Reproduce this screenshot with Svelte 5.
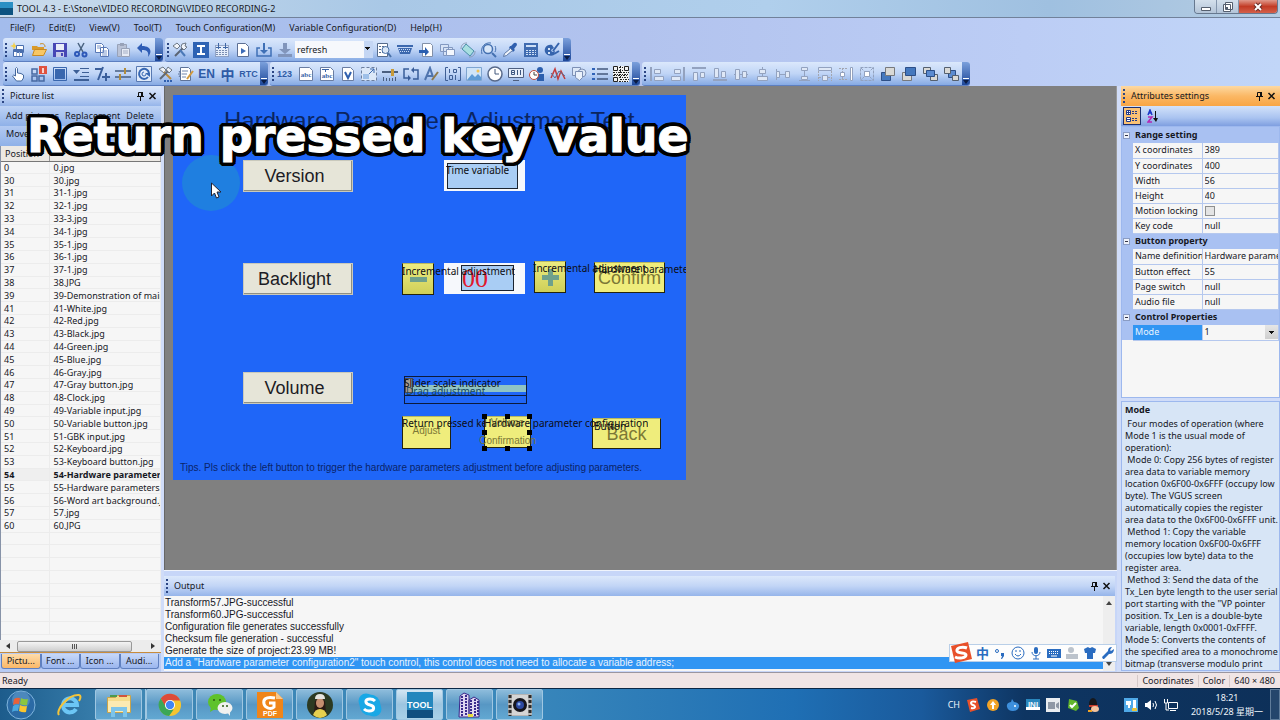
<script lang="ts">
  type Toolbar = { icons: string[]; combo?: boolean; after?: string[] };

  const menus = ['File(F)', 'Edit(E)', 'View(V)', 'Tool(T)', 'Touch Configuration(M)', 'Variable Configuration(D)', 'Help(H)'];

  // 16x16 glyphs, keyed by command name
  const icons: Record<string, string> = {
    new: '<path fill="#f4d04a" d="M4 0l1 3 3 1-3 1-1 3-1-3-3-1 3-1z"/><path fill="#fff" stroke="#4a6fae" d="M6.500 3.500h7v7h-7zM3.500 7.500h9v7h-9z"/><path fill="#4a6fae" d="M4 8h8v2H4z"/><path stroke="#9bb3d8" d="M6.500 10v4M9.500 10v4"/>',
    open: '<path fill="#d99a2b" d="M1 4h5l1 1h6v3H1z"/><path fill="#f8c765" stroke="#c98a22" d="M1.500 13.500l2-6h12l-3 6z"/><path fill="none" stroke="#c98a22" d="M9 2c3-1 5 0 5 3"/>',
    save: '<path fill="#4747b5" d="M1 1h14v14H1z"/><path fill="#e9edf8" d="M4 2h8v6H4z"/><path fill="#c7cbe8" d="M4 10h8v5H4z"/><path fill="#4747b5" d="M9 11h2v3H9z"/>',
    cut: '<path stroke="#49627f" stroke-width="1.500" d="M5 1l5 9M11 1L6 10"/><g fill="none" stroke="#2d58b8" stroke-width="2"><circle cx="4" cy="12" r="2"/><circle cx="11.500" cy="12.500" r="2"/></g>',
    copy: '<path fill="#fff" stroke="#5878b5" d="M1.500 1.500h6l2 2v7h-8zM6.500 5.500h6l2 2v7h-8z"/><path stroke="#7d98cc" d="M3 4h4M3 6h3M8 9h5M8 11h5M8 13h5"/>',
    paste: '<path fill="#b9c2d6" stroke="#98a2b8" d="M2.500 2.500h9v12h-9z"/><path fill="#98a2b8" d="M5 1h4v3H5z"/><path fill="#e6ebf5" stroke="#98a2b8" d="M6.500 6.500h8v8h-8z"/><path stroke="#a4aec4" d="M8 9h5M8 11h5"/>',
    undo: '<path fill="#2f5db5" d="M1 6l5-5v3c8 0 11 5 6 11 1-5-1-7-6-7v3z"/>',
    tools: '<path stroke="#5a6472" stroke-width="2" d="M3 14L12 5"/><path fill="#f2f5fa" stroke="#6d7886" d="M1 4l4-3 3 3-3 3zM10 2l4-1-1 3 2 1-3 3-3-3z"/><path stroke="#4b79b8" stroke-width="2" d="M8 8l5 6"/>',
    ibeam: '<path fill="#2e63b4" d="M0 0h16v16H0z"/><path stroke="#fff" stroke-width="2" d="M4 4h8M4 12h8M8 4v8"/>',
    grid: '<path fill="#e4edfa" stroke="#5a6f96" stroke-dasharray="1 1" d="M1.500 3.500h13v11h-13z"/><path stroke="#7a8eb2" stroke-dasharray="2 1" d="M2 8.500h12M2 10.500h12M2 12.500h12"/><path stroke="#3f66a5" d="M4.500 1v6M11.500 1v6M2 5.500h5M9 5.500h5"/>',
    play: '<path fill="#fff" stroke="#5c6f94" d="M2.500 1.500h8l3 3v10h-11z"/><path fill="#3c6bb7" d="M6 6l5 3-5 3z"/>',
    download: '<path fill="none" stroke="#3f70b6" stroke-width="1.500" d="M4 6H1v8h14V6h-3"/><path fill="#3f70b6" d="M7 1h2v7h3l-4 4-4-4h3z"/>',
    downoff: '<path fill="#8195bb" d="M6 1h4v6h4l-6 5-6-5h4zM1 12h14v3H1z"/>',
    preview: '<path fill="#fff" stroke="#566b8c" d="M1.500 1.500h10v13h-10z"/><path stroke="#566b8c" stroke-dasharray="2 1" d="M3 4.500h7M3 7.500h4M3 10.500h4"/><circle cx="9.500" cy="8" r="3.500" fill="#dbe8f8" stroke="#4a72a9"/><path stroke="#4a72a9" stroke-width="2" d="M12 11l3 4"/>',
    keyboard: '<path fill="#3c68ae" d="M0 3h16v2H0zM1 6h14l-2 6H3z"/><path stroke="#c6daf6" stroke-dasharray="1 1" d="M2 7.500h12M3 9.500h10"/>',
    export: '<path fill="#fff" stroke="#8290a8" d="M4.500 1.500h8l2 2v11h-10z"/><path fill="#2b5fb0" d="M1 8h6V5l4 5-4 4v-3H1z"/>',
    windows: '<path fill="#d7e3f6" stroke="#8298c0" d="M1.500 2.500h8v7h-8zM4.500 5.500h9v8h-9z"/><path fill="#f3f7fd" stroke="#8298c0" d="M7.500 7.500h8v6h-8z"/>',
    rotate: '<path fill="#a7dfe0" stroke="#4a8ea8" d="M6 2l8 7-4 5-8-7z"/><path fill="none" stroke="#8b9bb5" d="M1 7c0-4 2-6 6-6M15 9c0 4-2 6-6 6"/>',
    zoom: '<circle cx="7" cy="7" r="4.500" fill="#d8e6f8" stroke="#4470b0" stroke-width="1.500"/><path fill="none" stroke="#4470b0" d="M1 12C-1 5 4 0 10 1M14 4c1 2 1 4 0 6"/><path stroke="#4470b0" stroke-width="2" d="M11 11l4 4"/>',
    picker: '<path fill="#2f5fae" d="M9 4l3-3q3-1 3 2l-3 4 1 1-2 2-4-4 1-2z"/><path fill="#eef3fa" stroke="#5c77a4" d="M8.500 6.500l2 2-6 5-3 1 1-3z"/>',
    calc: '<path fill="#3f6bb0" d="M1 1h14v14H1z"/><path fill="#cfe0f6" d="M3 3h10v2H3z"/><path stroke="#cfe0f6" stroke-dasharray="2 1" d="M3 8.500h10M3 10.500h10M3 12.500h10"/>',
    brush: '<path fill="#3564ad" d="M8 3C2 2 0 7 1 10s6 5 9 3l1-4-3 1-1-2 3-2z"/><path stroke="#3564ad" stroke-width="2" d="M9 9l6-8M10 12l5-3"/><path fill="#d5e4f7" d="M4 6h2v2H4zM4 10h2v2H4z"/>',
    hand: '<path fill="#fff" stroke="#44689e" d="M5.500 8V2.500q1-2 2 0V7q4 0 6 2v3l-2 3h-5l-4-5q1-2 3 0z"/>',
    badge: '<g fill="none" stroke="#4769a2" stroke-width="1.500"><path d="M1 3h5v5H1zM1 10h5v5H1zM8 10h5v5H8z"/></g><path fill="#e0523f" d="M8 0h8v8H8z"/><path stroke="#fff" stroke-width="1.500" d="M12 2v5"/>',
    frame: '<path fill="none" stroke="#3a67ae" d="M1.500 1.500h13v13h-13z"/><path fill="#3a67ae" d="M3 3h10v10H3z"/>',
    droplist: '<path fill="#3d5f96" d="M0 4h7L3.500 8zM7 2h9v1H7zM9 6h7v1H9zM7 10h9v1H7zM1 13h15v2H1z"/>',
    plusminus: '<path stroke="#3b5f9b" stroke-width="2" d="M1 3h7M4 14l5-13M8 11h8M12 7v8"/>',
    sliders: '<path stroke="#475f82" stroke-width="1.500" d="M0 5h16M0 11h16"/><path fill="#b28c3c" d="M9 2h2v6H9zM4 8h2v6H4z"/>',
    refresh: '<path fill="#dfeafa" stroke="#5879b2" d="M.5.5h15v15H.5z"/><path fill="none" stroke="#3767b2" stroke-width="2" d="M12 11a5 5 0 1 1 1-4"/><path fill="none" stroke="#3767b2" d="M10 8a2 2 0 1 1-2-2"/><path fill="#3767b2" d="M9 7h5v4z"/>',
    hammer: '<path fill="#eef1f6" stroke="#6c7785" d="M2 3l4-2 3 3-2 3zM11 1l4 3-3 3-3-3z"/><path stroke="#b98b3f" stroke-width="2" d="M7 6l7 7"/><path stroke="#5e6875" stroke-width="2" d="M11 5l-8 8"/><path stroke="#3060b0" stroke-width="2" stroke-dasharray="2 1" d="M7 15h9"/>',
    edit: '<path fill="#fff" stroke="#5e7399" d="M2.500 1.500h8l2 2v11h-10z"/><path stroke="#7087ae" d="M4 5h6M4 8h5M4 11h4"/><path stroke="#d39a3c" stroke-width="2" d="M15 5l-6 8"/><path stroke="#5e7399" d="M0 8h3M1 5l2 3-2 3"/>',
    abc: '<path fill="#fff" stroke="#6a7da2" d="M1.500 1.500h10l3 3v10h-13z"/><text x="8" y="11" text-anchor="middle" font-size="7" font-family="Liberation Serif" font-weight="bold" fill="#3b65a8">abc</text>',
    abct: '<path fill="#fff" stroke="#6a7da2" d="M1.500 1.500h10l3 3v10h-13z"/><path stroke="#3b65a8" d="M3 3.500h7M6.500 3v3"/><text x="8" y="12" text-anchor="middle" font-size="7" font-family="Liberation Serif" font-weight="bold" fill="#3b65a8">abc</text>',
    v: '<path fill="#fff" stroke="#6a7da2" d="M2.500 1.500h8l3 3v10h-11z"/><path fill="none" stroke="#2f5fae" stroke-width="2" d="M5 6l3 6 3-6"/>',
    region: '<path fill="#dce8f8" stroke="#6d7f9e" stroke-dasharray="3 2" d="M.5 1.500h15v13H.5z"/><path fill="#9fc0e8" d="M2 8h6v5H2z"/><path fill="none" stroke="#3d6ab0" d="M8 8l5-5M9 3h4v4"/>',
    slider: '<path stroke="#4b5f80" stroke-width="2" d="M0 6h16"/><path fill="#c89b3a" d="M9 3h3v7H9z"/><path stroke="#4b5f80" d="M1.500 11v4M4.500 12v3M7.500 12v3M10.500 12v3M13.500 11v4"/>',
    cycle: '<path fill="none" stroke="#395d99" stroke-width="1.500" d="M6 3H1v9h4M10 13h5V4h-4"/><path fill="#395d99" d="M5 9l3 3-3 3zM11 1v6L8 4z"/>',
    font: '<path fill="none" stroke="#4f74ae" stroke-width="2" d="M1 14L6 2l3 9M3 10h6"/><path stroke="#8e7a4e" stroke-width="2" d="M14 6l-6 8"/>',
    bits: '<path fill="none" stroke="#3f5f95" d="M3 1.500H.5v13H3M13 1.500h2.500v13H13"/><path fill="none" stroke="#3f5f95" d="M4.500 3v4M8.500 3.500h3v3h-3zM4.500 9.500h3v4h-3zM10.500 9v5"/>',
    image: '<path fill="#cfe4f8" stroke="#7fa5d0" d="M.5 1.500h15v13H.5z"/><path fill="#5e9bd6" d="M1 14l5-6 3 3 3-3 3 3v3z"/><circle cx="12" cy="5" r="1.500" fill="#f0c052"/>',
    clock: '<circle cx="8" cy="8" r="7" fill="#fff" stroke="#58698a" stroke-width="1.500"/><path fill="none" stroke="#43587c" d="M8 3v5h4"/>',
    board: '<path fill="#e6eefa" stroke="#4e5f80" d="M.5 2.500h15v9H.5zM5 14.500h6"/><path fill="none" stroke="#3c5680" d="M3.500 4.500h3v2h-3zM3.500 6.500h3v2h-3zM9.500 4v5M12.500 4v5"/>',
    user: '<circle cx="11" cy="4" r="3" fill="#2c5fae"/><path fill="#2c5fae" d="M8 8h7v7H8z"/><circle cx="5" cy="9" r="4.500" fill="#fff" stroke="#c04a3c"/><path fill="none" stroke="#444" d="M5 6v3h3"/>',
    chart: '<path fill="none" stroke="#c23c3c" stroke-width="1.500" d="M1 12l4-9 3 10 3-8 4 8"/><path fill="none" stroke="#5a6f96" d="M1 7l4 5 4-7 6 5"/>',
    shapes: '<path fill="#dce7f7" stroke="#7d90b5" d="M1.500 1.500h8v8h-8z"/><circle cx="11" cy="7" r="4" fill="#dce7f7" stroke="#7d90b5"/><path fill="#eaf1fb" stroke="#7d90b5" d="M4.500 5.500h7v6l-3 3-4-3z"/>',
    list: '<path stroke="#44587c" stroke-width="1.500" d="M5 3h11M5 8h11M5 13h11"/><path fill="#2f62b8" d="M0 2h3v2H0zM0 7h3v2H0zM0 12h3v2H0z"/>',
    qr: '<path fill="#f2f2f2" d="M0 0h16v16H0z"/><path fill="none" stroke="#222" d="M.5.500h4v4h-4zM11.500.5h4v4h-4zM.5 11.500h4v4h-4z"/><path stroke="#222" stroke-dasharray="2 1 1 1" d="M6 1.500h5M6 4.500h5M0 6.500h16M1 8.500h15M0 9.500h14M6 11.500h10M7 13.500h9M6 15.500h9M7.500 0v16"/>',
    alLeft: '<path stroke="#93a2bf" stroke-width="2" d="M2 1v14"/><path fill="#dfe8f6" stroke="#93a2bf" d="M5.500 3.500h6v4h-6zM5.500 10.500h9v4h-9z"/>',
    alRight: '<path stroke="#93a2bf" stroke-width="2" d="M14 1v14"/><path fill="#dfe8f6" stroke="#93a2bf" d="M4.500 3.500h6v4h-6zM1.500 10.500h9v4h-9z"/>',
    alTop: '<path stroke="#93a2bf" stroke-width="2" d="M1 2h14"/><path fill="#dfe8f6" stroke="#93a2bf" d="M2.500 6.500h4v8h-4zM9.500 6.500h4v5h-4z"/>',
    alBottom: '<path stroke="#93a2bf" stroke-width="2" d="M1 14h14"/><path fill="#dfe8f6" stroke="#93a2bf" d="M2.500 2.500h4v9h-4zM9.500 5.500h4v6h-4z"/>',
    alMid: '<path stroke="#93a2bf" d="M1 8.500h14"/><path fill="#dfe8f6" stroke="#93a2bf" d="M2.500 3.500h4v10h-4zM9.500 5.500h4v6h-4z"/>',
    alCenter: '<path stroke="#93a2bf" d="M8.500 1v14"/><path fill="#dfe8f6" stroke="#93a2bf" d="M5.500 3.500h6v4h-6zM3.500 10.500h10v4h-10z"/>',
    spaceH: '<path stroke="#93a2bf" d="M1.500 3v11M5 8.500h5"/><path fill="#dfe8f6" stroke="#93a2bf" d="M1.500 5.500h3v6h-3zM10.500 5.500h4v6h-4z"/>',
    spaceV: '<path stroke="#93a2bf" d="M3 14.500h11M8.500 5v6"/><path fill="#dfe8f6" stroke="#93a2bf" d="M5.500 1.500h6v3h-6zM5.500 10.500h6v3h-6z"/>',
    sameW: '<path stroke="#a3a6b0" stroke-dasharray="2 1" d="M1.500 5v10M14.500 5v10M2 11.500h12"/><path fill="#dfe8f6" stroke="#93a2bf" d="M1.500 1.500h13v3h-13zM5.500 9.500h5v5h-5z"/>',
    sameH: '<path stroke="#a3a6b0" stroke-dasharray="2 1" d="M1 2.500h8M1 13.500h8M4.500 2v12"/><path fill="#fff" stroke="#93a2bf" d="M12.500 1.500h2v13h-2zM2.500 6.500h4v4h-4z"/>',
    sameWH: '<path fill="none" stroke="#93a2bf" stroke-dasharray="3 1" d="M1.500 1.500h13v13h-13zM2 2l12 12M14 2L2 14"/><path fill="#fff" stroke="#93a2bf" d="M5.500 5.500h5v5h-5z"/>',
    front: '<path fill="#4478be" stroke="#2d4f87" d="M1.500 6.500h9v8h-9z"/><path fill="#d9d9d6" stroke="#77797c" d="M5.500 1.500h9v8h-9z"/>',
    back: '<path fill="#d9d9d6" stroke="#77797c" d="M1.500 6.500h9v8h-9z"/><path fill="#4478be" stroke="#2d4f87" d="M4.500 1.500h10v8h-10z"/>',
    forward: '<path fill="#d9d9d6" stroke="#55606e" d="M1.500 1.500h7v6h-7zM8.500 8.500h7v6h-7z"/><path fill="#5b8bd0" stroke="#2d4f87" d="M4.500 4.500h8v6h-8z"/>',
    backward: '<path fill="#5b8bd0" stroke="#2d4f87" d="M5.500 4.500h7v7h-7z"/><path fill="#d9d9d6" stroke="#55606e" d="M1.500 1.500h6v6h-6zM9.500 9.500h6v5h-6z"/>',
  };

  // glyphs that are lettering rather than drawings
  const words: Record<string, string> = { en: 'EN', zhong: '中', rtc: 'RTC', num: '123' };

  const mainBars: Toolbar[] = [
    { icons: ['new', 'open', 'save', 'cut', 'copy', 'paste', 'undo'] },
    {
      icons: ['tools', 'ibeam', 'grid', 'play', 'download', 'downoff'],
      combo: true,
      after: ['preview', 'keyboard', 'export', 'windows', 'rotate', 'zoom', 'picker', 'calc', 'brush'],
    },
  ];

  const controlBars: Toolbar[] = [
    { icons: ['hand', 'badge', 'frame', 'droplist', 'plusminus', 'sliders', 'refresh', 'hammer', 'edit', 'en', 'zhong', 'rtc'] },
    { icons: ['num', 'abc', 'abct', 'v', 'region', 'slider', 'cycle', 'font', 'bits', 'image', 'clock', 'board', 'user', 'chart', 'shapes', 'list', 'qr'] },
    { icons: ['alLeft', 'alRight', 'alTop', 'alBottom', 'alMid', 'alCenter', 'spaceH', 'spaceV', 'sameW', 'sameH', 'sameWH', 'front', 'back', 'forward', 'backward'] },
  ];

  const pictures: [string, string][] = [
    ['0', '0.jpg'], ['30', '30.jpg'], ['31', '31-1.jpg'], ['32', '32-1.jpg'], ['33', '33-3.jpg'],
    ['34', '34-1.jpg'], ['35', '35-1.jpg'], ['36', '36-1.jpg'], ['37', '37-1.jpg'], ['38', '38.JPG'],
    ['39', '39-Demonstration of main.jpg'], ['41', '41-White.jpg'], ['42', '42-Red.jpg'], ['43', '43-Black.jpg'],
    ['44', '44-Green.jpg'], ['45', '45-Blue.jpg'], ['46', '46-Gray.jpg'], ['47', '47-Gray button.jpg'],
    ['48', '48-Clock.jpg'], ['49', '49-Variable input.jpg'], ['50', '50-Variable button.jpg'], ['51', '51-GBK input.jpg'],
    ['52', '52-Keyboard.jpg'], ['53', '53-Keyboard button.jpg'], ['54', '54-Hardware parameters.jpg'],
    ['55', '55-Hardware parameters.jpg'], ['56', '56-Word art background.jpg'], ['57', '57.jpg'], ['60', '60.JPG'],
  ];
  const blankRows = 8;
  let selected = $state('54');

  const tabs = ['Pictu...', 'Font ...', 'Icon ...', 'Audi...'];

  const groups = [
    {
      name: 'Range setting',
      rows: [['X coordinates', '389'], ['Y coordinates', '400'], ['Width', '56'], ['Height', '40'], ['Motion locking', 'check'], ['Key code', 'null']],
    },
    {
      name: 'Button property',
      rows: [['Name definition', 'Hardware parameter configuration2'], ['Button effect', '55'], ['Page switch', 'null'], ['Audio file', 'null']],
    },
    { name: 'Control Properties', rows: [['Mode', 'select']] },
  ];

  const help = [
    ' Four modes of operation (where', 'Mode 1 is the usual mode of', 'operation):',
    ' Mode 0: Copy 256 bytes of register', 'area data to variable memory', 'location 0x6F00-0x6FFF (occupy low',
    'byte). The VGUS screen', 'automatically copies the register', 'area data to the 0x6F00-0x6FFF unit.',
    ' Method 1: Copy the variable', 'memory location 0x6F00-0x6FFF', '(occupies low byte) data to the', 'register area.',
    ' Method 3: Send the data of the', 'Tx_Len byte length to the user serial', 'port starting with the "VP pointer',
    'position. Tx_Len is a double-byte', 'variable, length 0x0001-0xFFFF.', 'Mode 5: Converts the contents of',
    'the specified area to a monochrome', 'bitmap (transverse modulo print',
  ].join('\n');

  const output = [
    'Transform57.JPG-successful',
    'Transform60.JPG-successful',
    'Configuration file generates successfully',
    'Checksum file generation - successful',
    'Generate the size of project:23.99 MB!',
    'Add a "Hardware parameter configuration2" touch control, this control does not need to allocate a variable address;',
  ];
</script>

{#snippet tool(name: string)}
  <button class="tool" title={name}>
    {#if words[name]}
      <b class="word {name}">{words[name]}</b>
    {:else}
      <svg viewBox="0 0 16 16" width="16" height="16" fill="none">{@html icons[name]}</svg>
    {/if}
  </button>
{/snippet}

{#snippet toolbar(bar: Toolbar)}
  <div class="toolbar" role="toolbar">
    <i class="grip"></i>
    {#each bar.icons as name}{@render tool(name)}{/each}
    {#if bar.combo}
      <select class="combo" aria-label="Command"><option>refresh</option></select>
    {/if}
    {#each bar.after ?? [] as name}{@render tool(name)}{/each}
    <button class="more" aria-label="More buttons">
      <svg viewBox="0 0 8 8" width="8" height="8"><path fill="#fff" d="M1 1h6v1H1z" /><path fill="#0a1c44" d="M1 3h6L4 7z" /></svg>
    </button>
  </div>
{/snippet}

{#snippet panelButtons()}
  <button class="mini" aria-label="Pin">
    <svg viewBox="0 0 9 10" width="9" height="10"><path fill="none" stroke="#111" d="M2.500 1.500h4v4h-4zM1 5.500h7M4.500 6v4" /><path fill="#111" d="M5 1h2v5H5z" /></svg>
  </button>
  <button class="mini" aria-label="Close">
    <svg viewBox="0 0 9 10" width="9" height="10"><path fill="none" stroke="#111" stroke-width="1.500" d="M1.500 2l6 6M7.500 2l-6 6" /></svg>
  </button>
{/snippet}

<div class="window">
  <header class="titlebar">
    <span class="logo"></span>
    <h1>TOOL 4.3 - E:\Stone\VIDEO RECORDING\VIDEO RECORDING-2</h1>
    <div class="controls">
      <button aria-label="Minimize"><svg viewBox="0 0 12 10" width="12" height="10"><path fill="#fff" stroke="#555f6e" d="M1.500 5.500h9v3h-9z" /></svg></button>
      <button aria-label="Restore"><svg viewBox="0 0 12 10" width="12" height="10"><path fill="#fff" stroke="#555f6e" d="M3.500.5h7v7h-7zM1.500 2.500h7v7h-7z" /><path fill="#555f6e" d="M4 5h2v2H4z" /></svg></button>
      <button class="close" aria-label="Close window"><svg viewBox="0 0 12 10" width="12" height="10"><path stroke="#6b2b26" stroke-width="4" d="M3 2l6 6M9 2L3 8" /><path stroke="#fff" stroke-width="2" d="M3 2l6 6M9 2L3 8" /></svg></button>
    </div>
  </header>

  <nav class="menubar">
    {#each menus as menu}<button>{menu}</button>{/each}
  </nav>

  <div class="bars">
    <div class="barrow">{#each mainBars as bar}{@render toolbar(bar)}{/each}</div>
    <div class="barrow">{#each controlBars as bar}{@render toolbar(bar)}{/each}</div>
  </div>

  <main class="work">
    <aside class="left">
      <div class="panelhead"><i class="grip"></i><h2>Picture list</h2>{@render panelButtons()}</div>
      <div class="actions">
        <button>Add pictures</button><button>Replacement</button><button>Delete</button>
        <button>Move up</button>
      </div>
      <div class="listbox">
        <table class="pictures">
          <thead><tr><th>Position</th><th aria-label="Picture"></th></tr></thead>
          <tbody>
            {#each pictures as [position, name]}
              <tr class:selected={selected === position} onclick={() => (selected = position)}>
                <td>{position}</td><td>{name}</td>
              </tr>
            {/each}
            {#each Array(blankRows) as _}
              <tr><td>&nbsp;</td><td>&nbsp;</td></tr>
            {/each}
          </tbody>
        </table>
      </div>
      <div class="hscroll">
        <svg viewBox="0 0 6 8" width="6" height="8"><path fill="#333" d="M5 1v6L1 4z" /></svg>
        <div class="hthumb"><i></i><i></i><i></i></div>
        <svg viewBox="0 0 6 8" width="6" height="8"><path fill="#333" d="M1 1v6l4-3z" /></svg>
      </div>
      <div class="tabs">
        {#each tabs as tab, i}<button class:active={i === 0}>{tab}</button>{/each}
      </div>
    </aside>

    <section class="center">
      <div class="canvas">
        <div class="stage">
          <p class="heading">Hardware Parameters Adjustment Test</p>
          <div class="plate version">Version</div>
          <div class="plate backlight">Backlight</div>
          <div class="plate volume">Volume</div>

          <div class="field time"><span></span></div>
          <div class="field level"><span>00</span></div>

          <button class="key minus" aria-label="Decrease"></button>
          <button class="key plus" aria-label="Increase"></button>
          <button class="key confirm">Confirm</button>
          <button class="key adjust">Adjust</button>
          <button class="key apply"><span>Volume</span><span>Confirmation</span></button>
          <button class="key goback">Back</button>

          <div class="track"><input type="range" min="0" max="100" value="0" aria-label="Volume level" /></div>

          <span class="tag t-time">Time variable</span>
          <span class="tag t-dec">Incremental adjustment</span>
          <span class="tag t-inc">Incremental adjustment</span>
          <span class="tag t-conf">Hardware parameter configuration</span>
          <span class="tag t-slide">Slider scale indicator</span>
          <span class="tag t-drag">Drag adjustment</span>
          <span class="tag t-ret">Return pressed key value</span>
          <span class="tag t-hard">Hardware parameter configuration</span>
          <span class="tag t-btn">Button</span>

          <div class="handles">
            {#each Array(9) as _, i}<i class:blank={i === 4}></i>{/each}
          </div>

          <p class="tips">Tips. Pls click the left button to trigger the hardware parameters adjustment before adjusting parameters.</p>

          <div class="pointer">
            <svg viewBox="0 0 12 18" width="12" height="18"><path fill="#fff" stroke="#223" d="M.5 1v13l3-3 2 5 2.500-1-2-5h4z" /></svg>
          </div>
        </div>
      </div>

      <div class="output">
        <div class="panelhead"><i class="grip"></i><h2>Output</h2>{@render panelButtons()}</div>
        <div class="log">
          <ol>
            {#each output as line, i}<li class:current={i === output.length - 1}>{line}</li>{/each}
          </ol>
          <div class="vscroll">
            <svg viewBox="0 0 8 6" width="8" height="6"><path fill="#444" d="M1 5h6L4 1z" /></svg>
            <svg viewBox="0 0 8 6" width="8" height="6"><path fill="#444" d="M1 1h6L4 5z" /></svg>
          </div>
        </div>
        <div class="ime">
          <svg class="sogou" viewBox="0 0 22 22" width="22" height="22"><path fill="#e8502a" d="M1 4l17-4 4 17-17 4z" /><path fill="none" stroke="#fff" stroke-width="3" d="M17 6C12 4 6 6 7 9s9 1 9 4-7 4-11 2" /></svg>
          <b>中</b>
          <svg viewBox="0 0 14 14" width="14" height="14"><circle cx="4" cy="5" r="1.500" fill="none" stroke="#2a6cc0" /><path fill="#2a6cc0" d="M8 7h3v3l-2 3H8l1-3H8z" /></svg>
          <svg viewBox="0 0 14 14" width="14" height="14"><circle cx="7" cy="7" r="6" fill="none" stroke="#2a6cc0" /><path fill="none" stroke="#2a6cc0" d="M5 4v2M9 4v2M4 8q3 4 6 0" /></svg>
          <svg viewBox="0 0 14 14" width="14" height="14"><rect x="5" y="1" width="4" height="7" rx="2" fill="#2a6cc0" /><path fill="none" stroke="#2a6cc0" d="M3 6c0 5 8 5 8 0M7 10v3M4 13h6" /></svg>
          <svg viewBox="0 0 14 14" width="14" height="14"><rect x="0" y="3" width="14" height="9" fill="#2a6cc0" /><path stroke="#fff" stroke-dasharray="1 1" d="M2 5.500h10M2 7.500h10" /><path stroke="#fff" d="M4 10h6" /></svg>
          <svg viewBox="0 0 14 14" width="14" height="14"><circle cx="6" cy="4" r="3" fill="#bcc3cc" /><path fill="#bcc3cc" d="M1 8h12v5H1z" /></svg>
          <svg viewBox="0 0 14 14" width="14" height="14"><path fill="#2a6cc0" d="M1 3l4-2q2 2 4 0l4 2-1 4h-2v6H4V7H2z" /></svg>
          <svg viewBox="0 0 14 14" width="14" height="14"><path fill="#2a6cc0" d="M2 13l-1-2 6-6q0-4 4-4L9 4l1 1 3-2q0 5-5 5l-5 5z" /></svg>
        </div>
      </div>
    </section>

    <aside class="right">
      <div class="panelhead orange"><i class="grip"></i><h2>Attributes settings</h2>{@render panelButtons()}</div>
      <div class="sorters">
        <button class="on" aria-label="Categorized"><svg viewBox="0 0 14 14" width="14" height="14"><path fill="#fff" stroke="#223a8a" d="M1.500 1.500h4v4h-4zM1.500 8.500h4v4h-4z" /><path stroke="#223a8a" d="M3.500 2v3M2 3.500h3M2 10.500h3" /><path stroke="#223a8a" stroke-dasharray="2 1" d="M7 2.500h5M7 4.500h5M7 9.500h5M7 11.500h5" /></svg></button>
        <button aria-label="Alphabetical"><svg viewBox="0 0 12 14" width="12" height="14"><path fill="none" stroke="#1b38c8" stroke-width="1.500" d="M1 6l2-5 2 5M2 4h3" /><path fill="none" stroke="#b426b4" stroke-width="1.500" d="M1 8h4l-4 5h4" /><path fill="#111" d="M8 2h1v7h2l-2 4-3-4h2z" /></svg></button>
      </div>
      <div class="props">
        <table>
          <colgroup><col class="c-fold" /><col class="c-key" /><col /></colgroup>
          {#each groups as group}
            <tbody>
              <tr class="group"><td><i class="fold"></i></td><th colspan="2">{group.name}</th></tr>
              {#each group.rows as [key, value]}
                <tr class:current={key === 'Mode'}>
                  <td></td>
                  <th scope="row"><label for="p-{key}">{key}</label></th>
                  <td class="value">
                    {#if value === 'check'}
                      <input id="p-{key}" type="checkbox" />
                    {:else if value === 'select'}
                      <select id="p-{key}"><option>1</option></select>
                    {:else}
                      <input id="p-{key}" type="text" {value} />
                    {/if}
                  </td>
                </tr>
              {/each}
            </tbody>
          {/each}
        </table>
      </div>
      <div class="help">
        <h3>Mode</h3>
        <p>{help}</p>
      </div>
    </aside>
  </main>

  <div class="status"><span class="ready">Ready</span><span>Coordinates</span><span>Color</span><span>640 × 480</span></div>

  <footer class="taskbar">
    <button class="orb" aria-label="Start">
      <svg viewBox="0 0 30 30" width="30" height="30"><circle cx="15" cy="15" r="14" fill="#2b6aa5" stroke="#7fb4dc" /><circle cx="15" cy="10" r="9" fill="#6da6d3" opacity=".5" /><path fill="#e8623a" d="M8 9q3-2 6-1l-1 6q-3-1-6 1z" /><path fill="#8cc63f" d="M15 8q3 2 7 1l-1 6q-3 1-7-1z" /><path fill="#4aa8e0" d="M7 16q3-2 6-1l-1 6q-3-1-6 1z" /><path fill="#fbc52d" d="M14 15q3 2 7 1l-1 6q-3 1-7-1z" /></svg>
    </button>
    <button class="task flat" aria-label="Internet Explorer">
      <svg viewBox="0 0 26 26" width="26" height="26"><path fill="none" stroke="#6cc6f5" stroke-width="4" d="M20 17a7 7 0 1 1 1-4H8" /><path fill="none" stroke="#f3c43a" stroke-width="2" d="M3 23C-1 18 13 2 23 3q3 1 0 6" /></svg>
    </button>
    <button class="task" aria-label="Explorer">
      <svg viewBox="0 0 26 26" width="26" height="26"><path fill="#f5dc8c" stroke="#c9a44b" d="M1.500 5.500h8l2-2h13v17h-23z" /><path stroke="#4c9a4c" stroke-width="2" d="M4 4h7" /><path stroke="#d2543c" stroke-width="2" d="M13 4h8" /><path fill="#fbeab2" d="M2 9h22v11H2z" /><path fill="none" stroke="#7cc4ea" stroke-width="4" d="M7 25v-8h12v8" /></svg>
    </button>
    <i class="stack"></i>
    <button class="task" aria-label="Chrome">
      <svg viewBox="0 0 26 26" width="24" height="24"><circle cx="13" cy="13" r="12" fill="#f4c430" /><path fill="#dd4b39" d="M3 6a12 12 0 0 1 21 2H13a6 6 0 0 0-5 8z" /><path fill="#3aa757" d="M3 6l6 10q3 3 8 2l-5 7A12 12 0 0 1 3 6z" /><circle cx="13" cy="13" r="5.500" fill="#fff" /><circle cx="13" cy="13" r="4.500" fill="#4285f4" /></svg>
    </button>
    <button class="task" aria-label="WeChat">
      <svg viewBox="0 0 26 26" width="26" height="26"><ellipse cx="10" cy="10" rx="9" ry="8" fill="#5fc22b" /><path fill="#5fc22b" d="M4 15l-1 5 5-3z" /><ellipse cx="18" cy="16" rx="7.500" ry="6" fill="#f1f1ef" /><path fill="#f1f1ef" d="M20 20l3 4v-5z" /><g fill="#2c5a12"><circle cx="7" cy="8" r="1" /><circle cx="13" cy="8" r="1" /><circle cx="16" cy="14" r="1" /><circle cx="20" cy="14" r="1" /></g></svg>
    </button>
    <button class="task" aria-label="PDF reader">
      <svg viewBox="0 0 26 26" width="26" height="26"><path fill="#f08519" d="M0 0h19l7 7v19H0z" /><path fill="#fbc88a" d="M19 0l7 7h-7z" /><path fill="none" stroke="#fff" stroke-width="3" d="M18 6C8 4 6 8 7 12s7 6 10 3v-4h-5" /><text x="13" y="24" text-anchor="middle" font-size="7" font-family="Liberation Sans" font-weight="bold" fill="#fff">PDF</text></svg>
    </button>
    <button class="task" aria-label="Profile">
      <svg viewBox="0 0 26 26" width="26" height="26"><circle cx="13" cy="13" r="13" fill="#2c3a22" /><path fill="#2a1a14" d="M8 9q5-5 10 0l1 12H7z" /><ellipse cx="13" cy="11" rx="4" ry="5" fill="#c58f70" /><path fill="#e6e4de" d="M8 7q0-5 5-5t5 5z" /><path fill="#e6d04e" d="M6 23q2-6 7-6t7 6q-7 6-14 0z" /></svg>
    </button>
    <button class="task" aria-label="Skype">
      <svg viewBox="0 0 26 26" width="26" height="26"><circle cx="9" cy="9" r="7.500" fill="#19a8e6" /><circle cx="17" cy="17" r="7.500" fill="#19a8e6" /><circle cx="13" cy="13" r="10.500" fill="#19a8e6" /><path fill="none" stroke="#fff" stroke-width="3" d="M18 9q-2-2-5-2c-6 0-5 5 0 6s5 6-1 6q-3 0-5-2" /></svg>
    </button>
    <button class="task active" aria-label="Tool"><b class="toolicon">TOOL</b></button>
    <button class="task" aria-label="Builder">
      <svg viewBox="0 0 26 26" width="26" height="26"><path fill="#ded6f0" stroke="#3a2a8c" d="M3 4l4-3 5 2v22H2zM12 8l5-3 5 3v17H12z" /><path stroke="#3a2a8c" stroke-width="2" stroke-dasharray="2 1" d="M5 4v20M9 3v21M14 8v16M18 7v17M21 9v15" /><path fill="#e8dc3c" d="M11 22h5v3h-5z" /></svg>
    </button>
    <button class="task" aria-label="Recorder">
      <svg viewBox="0 0 26 26" width="26" height="26"><rect x="1" y="2" width="24" height="22" rx="2" fill="#b5b5b5" /><path stroke="#2a2a2a" stroke-width="3" stroke-dasharray="3 2" d="M3 3v21M23 3v21" /><rect x="5" y="3" width="16" height="20" fill="#d5d5d5" /><circle cx="13" cy="13" r="7" fill="#15151c" /><circle cx="13" cy="13" r="4" fill="#2c49a0" /><circle cx="12" cy="12" r="1.500" fill="#8fb4f0" /></svg>
    </button>

    <div class="tray">
      <span class="lang">CH</span>
      <svg viewBox="0 0 14 14" width="14" height="14"><path fill="#e8502a" d="M1 2l10-2 3 11-10 3z" /><path fill="none" stroke="#fff" stroke-width="2" d="M10 4C4 2 4 6 7 7s3 4-2 3" /></svg>
      <svg viewBox="0 0 14 14" width="14" height="14"><circle cx="7" cy="7" r="6" fill="#f2a325" /><path fill="#fff" d="M7 3l3 4H8v4H6V7H4z" /></svg>
      <svg viewBox="0 0 14 14" width="14" height="14"><path fill="#3d8fdc" d="M6 1l2 3q6 1 5 5t-6 4-6-4 4-5z" /><circle cx="9" cy="8" r="1" fill="#fff" /></svg>
      <span class="traytool">INI</span>
      <svg viewBox="0 0 14 14" width="14" height="14"><rect width="14" height="14" fill="#e9ecf0" /><path fill="#8f98a6" d="M2 4h7v7H2zM10 6l3-2v7l-3-2z" /></svg>
      <svg viewBox="0 0 14 14" width="14" height="14"><path fill="#62b52c" d="M3 1l8 2 2 7-3 3-8-3z" /><path fill="none" stroke="#fff" stroke-width="2" d="M4 7l2 2 4-4" /></svg>
      <svg viewBox="0 0 14 14" width="14" height="14"><ellipse cx="7" cy="6" rx="4" ry="6" fill="#16181c" /><path fill="#c83c2c" d="M3 7h9v2H3z" /><ellipse cx="9" cy="11" rx="4" ry="3" fill="#f3c3a0" /><path fill="#f2a325" d="M2 12h4v2H2z" /></svg>
      <svg class="apart" viewBox="0 0 14 14" width="14" height="14"><path fill="#4fa9e8" d="M0 0h14v14H0z" /><path fill="#fff" d="M2 3h5v4H2zM4 7h2v3H4zM9 2h3v8H9z" /><path fill="#e8c23c" d="M8 10h5v3H8z" /></svg>
      <svg viewBox="0 0 14 14" width="14" height="14"><path fill="#fff" d="M1 5h2l4-3v10L3 9H1z" /><path fill="none" stroke="#fff" d="M9 5q1 2 0 4M11 3q3 4 0 8" /></svg>
      <svg viewBox="0 0 14 14" width="14" height="14"><path fill="none" stroke="#fff" d="M4.500 4.500h9v6h-9zM6 12.500h6M.5 1v4h3v-4M2 5v7h3" /></svg>
      <time><span>18:21</span><span>2018/5/28 星期一</span></time>
    </div>
    <button class="desktop" aria-label="Show desktop"></button>
  </footer>

  <p class="caption">Return pressed key value</p>
</div>

<style>
  :global(body) {
    margin: 0;
  }

  .window {
    position: relative;
    display: flex;
    flex-direction: column;
    height: 100vh;
    overflow: hidden;
    background: #bccff5;
    color: #16181f;
    font: 9px/12px "Noto Sans", "Noto Sans CJK SC", sans-serif;
  }

  .window * {
    box-sizing: border-box;
  }

  button,
  input,
  select {
    margin: 0;
    padding: 0;
    border: 0;
    background: none;
    color: inherit;
    font: inherit;
  }

  svg {
    display: block;
    flex: none;
  }

  h1,
  h2,
  h3,
  p,
  ol {
    margin: 0;
    padding: 0;
    font-size: inherit;
    font-weight: normal;
  }

  /* title bar and menu */
  .titlebar {
    display: flex;
    align-items: center;
    flex: none;
    height: 18px;
    padding-right: 2px;
    border-bottom: 1px solid #71819a;
    background: linear-gradient(90deg, #cbdcec, #a9c8e6 30%, #b0cfec 60%, #9fc0e0 82%, #b5cce2);
  }

  .titlebar h1 {
    flex: 1;
    margin-left: 4px;
    white-space: nowrap;
  }

  .logo {
    width: 13px;
    height: 13px;
    background: linear-gradient(#2a8fc4 50%, #0d5380 50%);
  }

  .controls {
    display: flex;
    align-self: flex-start;
    border: 1px solid #66788f;
    border-top: 0;
    border-radius: 0 0 4px 4px;
    overflow: hidden;
  }

  .controls button {
    display: flex;
    justify-content: center;
    align-items: center;
    width: 22px;
    height: 13px;
    border-right: 1px solid #8496ad;
    background: linear-gradient(#d4e0ec, #b3c4d8);
  }

  .controls .close {
    width: 38px;
    border: 0;
    background: linear-gradient(#e09a8c, #c23b25 50%, #d4604a);
  }

  .menubar {
    display: flex;
    align-items: center;
    flex: none;
    height: 20px;
    padding-left: 3px;
    background: linear-gradient(90deg, #a3bcec, #b2c3ee 50%, #bccdf5 80%, #c1d6f8);
  }

  .menubar button {
    padding: 0 7px;
  }

  /* toolbars */
  .bars {
    flex: none;
    background: linear-gradient(90deg, #a3bcec, #b2c3ee 50%, #bccdf5 80%, #c1d6f8);
  }

  .barrow {
    display: flex;
    gap: 2px;
    height: 24px;
    padding-left: 3px;
  }

  .toolbar {
    display: flex;
    align-items: center;
    height: 24px;
    border-radius: 3px;
    background: linear-gradient(#dbe8fc, #c0d5f6 50%, #86aae4);
    border-bottom: 1px solid #5d7fc0;
  }

  .grip {
    flex: none;
    width: 2px;
    height: 14px;
    margin: 0 0 0 2px;
    background: repeating-linear-gradient(#2c4684 0 2px, transparent 2px 4px);
  }

  .tool {
    display: flex;
    justify-content: center;
    align-items: center;
    flex: none;
    width: 21px;
    height: 21px;
  }

  .word {
    color: #2f5ba6;
    font: bold 12px "Liberation Sans", "Noto Sans CJK SC", sans-serif;
  }

  .word.rtc,
  .word.num {
    font-size: 9px;
  }

  .word.zhong {
    font-size: 14px;
  }

  .more {
    display: flex;
    align-items: flex-end;
    width: 8px;
    height: 23px;
    margin-left: 1px;
    border-radius: 0 3px 3px 0;
    background: linear-gradient(#7ba0dc, #1d4799);
  }

  .combo {
    width: 78px;
    height: 17px;
    padding: 0 2px;
    appearance: none;
    border-radius: 0;
    background:
      linear-gradient(#111, #111) right 5px top 8px / 1px 1px no-repeat,
      linear-gradient(#111, #111) right 4px top 7px / 3px 1px no-repeat,
      linear-gradient(#111, #111) right 3px top 6px / 5px 1px no-repeat,
      linear-gradient(90deg, #f6f8fc 69px, #c4d6f4 69px);
  }

  /* docked panels */
  .work {
    display: flex;
    flex: 1;
    min-height: 0;
  }

  .panelhead {
    display: flex;
    align-items: center;
    flex: none;
    height: 20px;
    padding-right: 4px;
    background: linear-gradient(#dce8fb, #c2d5f6 50%, #96b5ea);
  }

  .panelhead h2 {
    flex: 1;
    margin-left: 6px;
  }

  .panelhead.orange {
    background: linear-gradient(#fdd9a2, #fbb865 50%, #f9a544);
  }

  .mini {
    margin-left: 3px;
  }

  .left {
    display: flex;
    flex-direction: column;
    flex: none;
    width: 164px;
    padding-right: 3px;
    background: #d0dcf8;
  }

  .actions {
    display: flex;
    flex-wrap: wrap;
    align-content: flex-start;
    gap: 6px;
    height: 40px;
    padding: 4px 3px 0 6px;
    background: linear-gradient(#bed3f5, #8fb1e8 50%, #b3caf2 50%, #8fb1e8);
  }

  .listbox {
    flex: 1;
    min-height: 0;
    padding-bottom: 5px;
    border-left: 1px solid #8793a8;
    overflow: hidden;
    background: #f6f6f6;
  }

  .pictures {
    width: 100%;
    height: 100%;
    table-layout: fixed;
    border-collapse: collapse;
    line-height: 11px;
  }

  .pictures th {
    height: 15px;
    padding: 0 4px;
    border-right: 1px solid #999;
    border-bottom: 1px solid #777;
    background: #ece9e4;
    font-weight: normal;
    text-align: left;
  }

  .pictures th:first-child {
    width: 48px;
  }

  .pictures td {
    padding: 0 3px;
    border-right: 1px solid #ececec;
    border-bottom: 1px solid #ececec;
    overflow: hidden;
    white-space: nowrap;
  }

  .pictures td + td {
    padding-left: 4px;
  }

  .pictures .selected {
    background: #efefef;
    font-weight: bold;
  }

  .hscroll {
    display: flex;
    align-items: center;
    gap: 6px;
    height: 12px;
    padding: 0 5px;
    background: #ececec;
  }

  .hthumb {
    display: flex;
    justify-content: center;
    align-items: center;
    gap: 1px;
    width: 115px;
    height: 11px;
    margin-right: auto;
    border: 1px solid #999;
    border-radius: 2px;
    background: linear-gradient(#f4f4f4, #cfcfcf);
  }

  .hthumb i {
    width: 1px;
    height: 5px;
    background: #555;
  }

  .tabs {
    display: flex;
    height: 20px;
    padding: 1px 2px 3px 1px;
    border-top: 1px solid #c88c3c;
    background: #b7cbf4;
  }

  .tabs button {
    flex: 1;
    border: 1px solid #5f80c0;
    border-top: 0;
    border-radius: 0 0 3px 3px;
    background: linear-gradient(#c7d8f8, #9bb6ee);
  }

  .tabs .active {
    background: linear-gradient(#fddcab, #fbb868);
  }

  .center {
    display: flex;
    flex-direction: column;
    flex: 1;
    min-width: 0;
  }

  .canvas {
    flex: 1;
    min-height: 0;
    padding: 9px 8px;
    overflow: hidden;
    border-left: 1px solid #666;
    border-right: 1px solid #999;
    background: #808080;
  }

  /* the screen being designed: controls sit at free coordinates */
  .stage {
    position: relative;
    width: 513px;
    height: 385px;
    overflow: hidden;
    background: #1f66f8;
    font-family: "Liberation Sans", Arial, sans-serif;
  }

  .stage > * {
    position: absolute;
  }

  .heading {
    top: 12px;
    left: 51px;
    color: #0b2560;
    font-size: 24px;
    line-height: 28px;
    white-space: nowrap;
  }

  .plate {
    left: 70px;
    width: 110px;
    height: 32px;
    padding-right: 7px;
    border: 1px solid #c9c9bc;
    background: #e6e5d8;
    box-shadow: inset -1px -1px #8f8f84;
    color: #1c1c24;
    font-size: 18px;
    line-height: 31px;
    text-align: center;
  }

  .version { top: 65px; }
  .backlight { top: 168px; }
  .volume { top: 277px; }

  .field {
    left: 271px;
    width: 81px;
    height: 31px;
    padding: 3px;
    background: #f6f8fc;
  }

  .field span {
    display: block;
    height: 26px;
    border: 1px solid #1c2430;
    background: #a9cdf4;
    color: #e0182c;
    font: 26px/25px "Liberation Serif", serif;
  }

  .time { top: 65px; }
  .time span { width: 71px; }
  .level { top: 168px; padding: 2px 0 0 17px; }
  .level span { width: 53px; }

  .key {
    border: 1px solid #23240c;
    border-top-color: #b9b860;
    background: #efed7c;
    color: #7c7836;
    font-size: 18px;
  }

  .minus,
  .plus {
    width: 32px;
    height: 32px;
  }

  .minus {
    top: 168px;
    left: 229px;
    background: linear-gradient(#6fa08c, #6fa08c) center / 17px 5px no-repeat, linear-gradient(#eceb80, #cfcf58);
  }

  .plus {
    top: 166px;
    left: 361px;
    background:
      linear-gradient(#6fa08c, #6fa08c) center / 17px 5px no-repeat,
      linear-gradient(#6fa08c, #6fa08c) center / 5px 17px no-repeat,
      linear-gradient(#eceb80, #cfcf58);
  }

  .confirm { top: 167px; left: 421px; width: 71px; height: 31px; }

  .adjust { top: 321px; left: 229px; width: 49px; height: 33px; padding-bottom: 3px; font-size: 10px; }

  .apply {
    top: 321px;
    left: 311px;
    display: flex;
    flex-direction: column;
    justify-content: space-between;
    align-items: center;
    width: 47px;
    height: 32px;
    font-size: 10px;
  }

  .goback { top: 323px; left: 419px; width: 69px; height: 31px; }

  .track {
    top: 281px;
    left: 231px;
    width: 123px;
    height: 28px;
    border: 1px solid #0c1a3c;
    background: linear-gradient(transparent 8px, #8fc3c4 8px 15px, transparent 15px 18px, #0c1a3c 18px 19px, transparent 19px);
  }

  .track input {
    display: block;
    width: 100%;
    height: 16px;
    appearance: none;
  }

  .track input::-webkit-slider-thumb {
    width: 8px;
    height: 15px;
    appearance: none;
    border: 1px solid #4c4c50;
    background: #a89c90;
  }

  .tag {
    overflow: hidden;
    color: #0d0d12;
    font: 10px/12px "Noto Sans", sans-serif;
    white-space: nowrap;
  }

  .t-time { top: 69px; left: 273px; }
  .t-dec { top: 170px; left: 229px; }
  .t-inc { top: 167px; left: 360px; }
  .t-conf { top: 168px; left: 421px; }
  .t-slide { top: 282px; left: 231px; }
  .t-drag { top: 290px; left: 233px; color: #16465c; }
  .t-ret { top: 322px; left: 229px; width: 83px; }
  .t-hard { top: 322px; left: 311px; }
  .t-btn { top: 325px; left: 421px; }

  .handles {
    top: 319px;
    left: 309px;
    display: grid;
    grid-template-columns: repeat(3, 5px);
    justify-content: space-between;
    align-content: space-between;
    width: 50px;
    height: 37px;
    pointer-events: none;
  }

  .handles i {
    height: 5px;
    background: #000;
  }

  .handles .blank {
    visibility: hidden;
  }

  .tips {
    top: 367px;
    left: 7px;
    color: #0a2468;
    font-size: 10px;
    white-space: nowrap;
  }

  .pointer {
    top: 60px;
    left: 9px;
    width: 58px;
    height: 56px;
    padding: 27px 0 0 29px;
    border-radius: 50%;
    background: #1f7fe0;
  }

  /* output panel */
  .output {
    position: relative;
    flex: none;
    padding: 5px 2px 1px 0;
    border-top: 1px solid #f0f4fc;
    background: #c7d6f8;
  }

  .log {
    display: flex;
    height: 75px;
    background: #f6f6f6;
  }

  .log ol {
    flex: 1;
    min-width: 0;
    padding-top: 1px;
    list-style: none;
    font: 10px/12px "Liberation Sans", Arial, sans-serif;
    white-space: nowrap;
  }

  .log li {
    padding-left: 1px;
  }

  .log .current {
    background: #3095f3;
    color: #e8f3ff;
  }

  .vscroll {
    display: flex;
    flex-direction: column;
    justify-content: space-between;
    align-items: center;
    width: 12px;
    padding: 4px 0;
    background: #eeeeee;
  }

  .ime {
    position: absolute;
    right: 0;
    bottom: 10px;
    display: flex;
    align-items: center;
    gap: 4px;
    height: 18px;
    padding-right: 1px;
    border: 1px solid #b9cfe8;
    background: #fdfdfd;
  }

  .ime b {
    color: #2a6cc0;
    font-size: 13px;
  }

  /* attributes */
  .right {
    display: flex;
    flex-direction: column;
    flex: none;
    width: 163px;
    padding: 0 0 1px 4px;
    background: #d0dcf8;
  }

  .sorters {
    display: flex;
    flex: none;
    gap: 3px;
    height: 20px;
    padding: 1px 2px;
    background: linear-gradient(#d3e2fa, #a9c3f0 60%, #7f9fe0);
  }

  .sorters button {
    display: flex;
    justify-content: center;
    align-items: center;
    width: 18px;
    height: 18px;
  }

  .sorters .on {
    border: 1px solid #1d2f70;
    background: #fbc274;
  }

  .props {
    flex: none;
    height: 272px;
    border: 1px solid #9db8ee;
    background: #f6f6f6;
  }

  .props table {
    width: 100%;
    table-layout: fixed;
    border-collapse: collapse;
  }

  .c-fold {
    width: 11px;
  }

  .c-key {
    width: 69px;
  }

  .props tr {
    height: 15px;
  }

  .props .group {
    height: 16px;
    background: #a9c1f2;
  }

  .props td,
  .props th {
    padding: 0;
    overflow: hidden;
    font-weight: normal;
    text-align: left;
    line-height: 14px;
    white-space: nowrap;
  }

  .props td:first-child {
    background: #a9c1f2;
  }

  .props tr:not(.group) th {
    padding-left: 2px;
  }

  .props tr:not(.group) th,
  .props .value {
    border-right: 1px solid #b5c8ee;
    border-bottom: 1px solid #b5c8ee;
  }

  .props .group th {
    padding-left: 2px;
    font-weight: bold;
  }

  .props .value {
    padding-left: 2px;
  }

  .props .current th {
    background: #3095f3;
    color: #e8f3ff;
  }

  .fold {
    display: block;
    width: 7px;
    height: 7px;
    margin-left: 1px;
    border: 1px solid #8a9cc4;
    background: linear-gradient(#334, #334) center / 3px 1px no-repeat #eef2fb;
  }

  .value input,
  .value select {
    display: block;
    width: 100%;
    height: 14px;
  }

  .value input[type="checkbox"] {
    width: 10px;
    height: 10px;
    appearance: none;
    border: 1px solid #8e8f8f;
    background: #e4e4e4;
  }

  .value select {
    appearance: none;
    border-radius: 0;
    background:
      linear-gradient(#111, #111) right 6px top 8px / 1px 1px no-repeat,
      linear-gradient(#111, #111) right 5px top 7px / 3px 1px no-repeat,
      linear-gradient(#111, #111) right 4px top 6px / 5px 1px no-repeat,
      linear-gradient(#e6e6e6, #cfcfcf) right / 13px 14px no-repeat;
  }

  .help {
    flex: 1;
    min-height: 0;
    margin-top: 3px;
    padding: 2px 0 0 3px;
    overflow: hidden;
    border: 1px solid #9db8ee;
    background: #d7e5f6;
  }

  .help h3 {
    margin-bottom: 2px;
    font-weight: bold;
  }

  .help p {
    white-space: pre;
  }

  /* status and taskbar */
  .status {
    display: flex;
    align-items: center;
    flex: none;
    height: 16px;
    padding-right: 1px;
    border-top: 1px solid #9a96a0;
    background: #f0e5e5;
  }

  .status span {
    padding: 0 4px;
    border-left: 1px solid #d5c9c9;
  }

  .status .ready {
    flex: 1;
    padding-left: 2px;
    border: 0;
  }

  .taskbar {
    display: flex;
    align-items: center;
    flex: none;
    height: 32px;
    border-top: 1px solid #0b2745;
    background: linear-gradient(90deg, #1d5c8c, #3f87b4 10%, #3a88bb 40%, #1f6fb4 62%, #1a5a9c 72%, #0e3562 80%, #0d3059);
  }

  .orb {
    width: 45px;
    padding-left: 6px;
  }

  .task {
    display: flex;
    justify-content: center;
    align-items: center;
    width: 47px;
    height: 31px;
    margin-right: 3px;
    border: 1px solid #9fc7e2;
    border-radius: 2px;
    background: linear-gradient(#8dbcdb, #5797c4 50%, #62a8d2);
  }

  .task.flat {
    border-color: transparent;
    background: none;
  }

  .task.active {
    background: linear-gradient(#d3e6f3, #9cc5e0 50%, #a9d1e8);
  }

  .stack {
    width: 1px;
    height: 31px;
    background: #9fc7e2;
  }

  .toolicon {
    width: 26px;
    height: 26px;
    background: linear-gradient(#2487bd 70%, #0f4f80 70%);
    color: #fff;
    font: bold 9px/26px "Liberation Sans", sans-serif;
  }

  .tray {
    display: flex;
    align-items: center;
    gap: 6px;
    margin-left: auto;
    color: #eef4fa;
  }

  .traytool {
    width: 14px;
    background: linear-gradient(#2a87bd 70%, #fff 70%);
    font: bold 8px/11px "Liberation Sans", sans-serif;
    text-align: center;
  }

  .apart {
    margin-left: 18px;
  }

  .tray time {
    display: flex;
    flex-direction: column;
    align-items: center;
    width: 86px;
    line-height: 14px;
    white-space: nowrap;
  }

  .desktop {
    width: 10px;
    height: 31px;
    border: 1px solid #5f7c9a;
    background: #24466c;
  }

  /* subtitle laid over the whole window */
  .caption {
    position: absolute;
    top: 109px;
    left: 27px;
    color: #fff;
    font: bold 46px/54px "DejaVu Sans", sans-serif;
    white-space: nowrap;
    pointer-events: none;
    -webkit-text-stroke: 1px #fff;
    text-shadow:
      4px 0 #000, -4px 0 #000, 0 4px #000, 0 -4px #000,
      3px 3px #000, -3px 3px #000, 3px -3px #000, -3px -3px #000,
      4px 2px #000, -4px 2px #000, 4px -2px #000, -4px -2px #000,
      2px 4px #000, -2px 4px #000, 2px -4px #000, -2px -4px #000;
  }
</style>
